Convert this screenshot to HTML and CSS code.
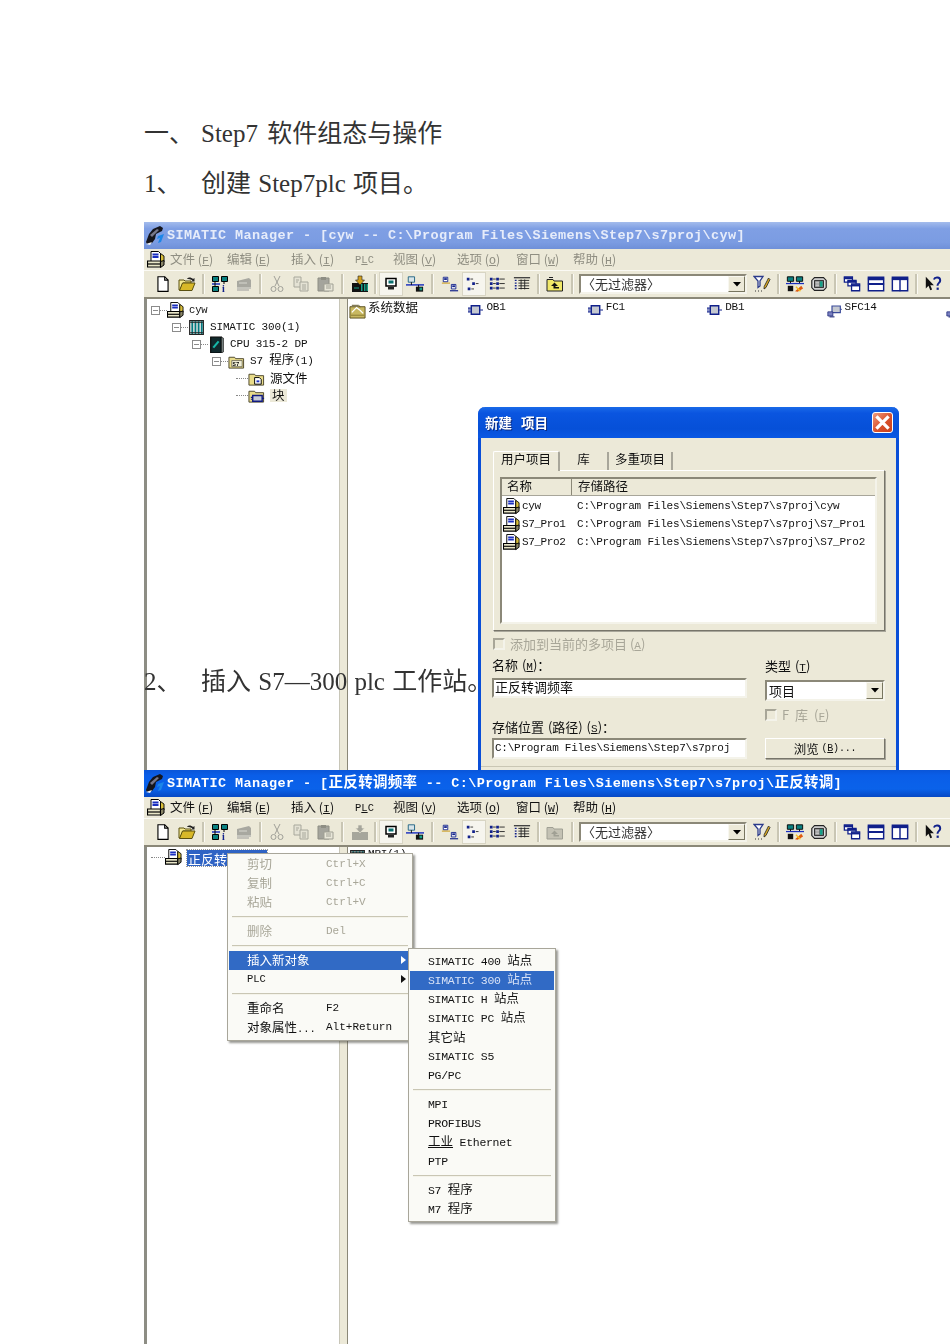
FILE: index.html
```html
<!DOCTYPE html>
<html lang="zh">
<head>
<meta charset="utf-8">
<title>Step7 软件组态与操作</title>
<link rel="stylesheet" href="styles.css">
</head>
<body>
<svg class="sprites" xmlns="http://www.w3.org/2000/svg">
  <symbol id="logo" viewBox="0 0 20 20"><path d="M1 16 4 8l4-5 7-3 3 2-1 3-4 2-2 1-1 5-3 4-5 1z" fill="#15151c"/><path d="M5 9 12 3l2 1-7 7z" fill="#77778a"/><path d="M13 10l6-2-3 8-3 1 2-5-3 1z" fill="#1c86e8"/><path d="M1 18l6-2-2 3z" fill="#f4f4f4"/></symbol>
  <symbol id="project" viewBox="0 0 18 18"><path d="M4 .5h7.500l2 2v8H4z" fill="#fff" stroke="#000"/><path d="M5.500 3.500h6M5.500 6h6" stroke="#1a2fc0" stroke-width="1.800"/><path d="M13.500 2.500l3.500 2.500v6l-3.500 2z" fill="#d9bf3a" stroke="#000" stroke-width=".9"/><path d="M.5 10h13v6H.5z" fill="#e9e6c8" stroke="#000" stroke-width="1.200"/><path d="M1 13h12" stroke="#000" stroke-width="1.200"/><path d="M13.500 10.500l3.500-1v4.500l-3.500 2.500z" fill="#8a8668" stroke="#000"/></symbol>
  <symbol id="rack" viewBox="0 0 16 16"><path d="M1.500 1.500h13v13h-13z" fill="#cfd8d8" stroke="#222"/><path d="M4 2v12M7 2v12M10 2v12M13 2v12" stroke="#007a80" stroke-width="1.500"/><path d="M2 3h12M2 13h12" stroke="#222"/></symbol>
  <symbol id="cpu" viewBox="0 0 16 16"><path d="M2.500 1h10v15h-10z" fill="#11292c" stroke="#000"/><path d="M12.500 1l2 1v13l-2 1z" fill="#7e8a88" stroke="#000" stroke-width=".6"/><path d="M5 11l5-6" stroke="#17b8a8" stroke-width="2"/></symbol>
  <symbol id="s7folder" viewBox="0 0 18 16"><path d="M1 3.500h6l1 1.500h8.500v10H1z" fill="#e9dc8a" stroke="#4a452b"/><path d="M4 7h11v6.500H4z" fill="#f2f0d8" stroke="#333" stroke-width=".6"/><text class="svg-s7" x="4.800" y="13">S7</text></symbol>
  <symbol id="srcfolder" viewBox="0 0 18 16"><path d="M1 3.500h6l1 1.500h8.500v10H1z" fill="#e9dc8a" stroke="#4a452b"/><path d="M7 7h5l2 2v5H7z" fill="#fff" stroke="#000"/><path d="M9 10h3v2H9z" fill="#1a2fc0"/></symbol>
  <symbol id="blockfolder" viewBox="0 0 18 16"><path d="M1 3.500h6l1 1.500h8.500v10H1z" fill="#e9dc8a" stroke="#4a452b"/><path d="M5 8h10v6H5z" fill="#c8ccd8" stroke="#101a80" stroke-width="1.500"/><path d="M3 10h2M3 12h2M15 11h2" stroke="#101a80" stroke-width="1.200"/></symbol>
  <symbol id="sysdata" viewBox="0 0 18 18"><path d="M1 5h16v12H1z" fill="#c8b860" stroke="#5a5020"/><path d="M3 3.500h7l2 1.500" fill="none" stroke="#5a5020"/><path d="M3 11l5-5 4 3 3 3" fill="none" stroke="#fff" stroke-width="1.300"/><path d="M2 14h14" stroke="#8a7a30"/></symbol>
  <symbol id="block" viewBox="0 0 16 12"><path d="M3.500 1.500h9v9h-9z" fill="#c4c8d0" stroke="#10208a" stroke-width="1.500"/><path d="M0 4h3M0 6h3M0 8h3M13 6h3" stroke="#10208a" stroke-width="1.300"/></symbol>
  <symbol id="sfc" viewBox="0 0 18 16"><path d="M6 2h10v8H6z" fill="#c4c8d0" stroke="#3a4a9a" stroke-width="1.400"/><path d="M1 9h6v5H1z" fill="#7a80c0" stroke="#2a3480"/><path d="M3 15h6" stroke="#2a3480" stroke-width="1.400"/><path d="M16 6h2" stroke="#3a4a9a"/></symbol>
  <symbol id="t-new" viewBox="0 0 16 16"><path d="M3.500 1.500h6l3 3v10h-9z" fill="#fff" stroke="#000"/><path d="M9.500 1.500v3h3" fill="none" stroke="#000"/></symbol>
  <symbol id="t-open" viewBox="0 0 18 16"><path d="M1 4h5l1 1h6v2H5L2 14H1z" fill="#f4e890" stroke="#5a5010"/><path d="M4.500 7H17l-3 7.500H1.500z" fill="#d8b828" stroke="#5a5010"/><path d="M9 3c1-2 4-2 6 0l1.500-1v3.500H13l1.500-1c-1.500-1.500-4-1.500-5.500-1.500z" fill="#222"/></symbol>
  <symbol id="t-net" viewBox="0 0 18 18"><path d="M1.500 1.500h6v5h-6z" fill="#0a8080" stroke="#000"/><path d="M10.500 1.500h6v5h-6z" fill="#0a8080" stroke="#000"/><path d="M1.500 11.500h6v5h-6z" fill="#0a8080" stroke="#000"/><path d="M1 9h8" stroke="#1a2fc0" stroke-width="1.500"/><path d="M4 7v4M13 7v2" stroke="#000"/><text class="svg-i" x="11" y="17">i</text></symbol>
  <symbol id="t-card" viewBox="0 0 18 16"><path d="M2 5l12-3 2 2v7H2z" fill="#a8a8a0"/><path d="M2 11h14v2H2z" fill="#c4c4bc"/><path d="M3 13v2M5 13v2M7 13v2M9 13v2M11 13v2M13 13v2" stroke="#999"/><path d="M4 7h8" stroke="#d8d8d0"/></symbol>
  <symbol id="t-cut" viewBox="0 0 16 18"><path d="M5 1l5 10M11 1 6 11" stroke="#a0a098" fill="none"/><circle cx="4.500" cy="14" r="2.500" fill="none" stroke="#a0a098"/><circle cx="11.500" cy="14" r="2.500" fill="none" stroke="#a0a098"/></symbol>
  <symbol id="t-copy" viewBox="0 0 18 16"><path d="M2 1h7v10H2z" fill="#e4e2d4" stroke="#a8a89c"/><path d="M8 6h8v9H8z" fill="#e4e2d4" stroke="#a8a89c"/><path d="M10 9h4M10 11h4M10 13h4M4 4h3M4 6h2" stroke="#a8a89c"/></symbol>
  <symbol id="t-paste" viewBox="0 0 18 16"><path d="M2 2h11v13H2z" fill="#a4a49c" stroke="#8e8e84"/><path d="M5 1h5v3H5z" fill="#8e8e84"/><path d="M8 8h9v7H8z" fill="#e8e6d8" stroke="#a0a094"/><path d="M10 10h5M10 12h5" stroke="#a0a094"/></symbol>
  <symbol id="t-down" viewBox="0 0 18 16"><path d="M1 7h16v9H1z" fill="#111"/><path d="M10 8h1.500v7H10zM13 8h1.500v7H13zM15.500 8H17v7h-1.500z" fill="#16a088"/><path d="M3 12h5" stroke="#16a088"/><path d="M7 0h4v4h2.500L9 9 4.500 4H7z" fill="#d0a020" stroke="#222" stroke-width=".6"/></symbol>
  <symbol id="t-down-off" viewBox="0 0 18 16"><path d="M1 8h16v8H1z" fill="#a6a69c"/><path d="M7 1h4v3h2.500L9 9 4.500 4H7z" fill="#a6a69c" stroke="#ece9d8" stroke-width=".6"/></symbol>
  <symbol id="t-pc" viewBox="-2 -2 18 18"><path d="M2 1.500h10v7.500H2z" fill="#fff" stroke="#000" stroke-width="1.500"/><path d="M4.500 3.500h5v3h-5z" fill="#0a7070"/><path d="M4 10h6v2.500H4z" fill="#222"/></symbol>
  <symbol id="t-netlist" viewBox="0 0 20 18"><path d="M2.500 1h7v6h-7z" fill="#d8e4e8" stroke="#1a5f80"/><path d="M0 10h20" stroke="#1a2fc0" stroke-width="1.600"/><path d="M6 7v3M14 10v3" stroke="#000"/><path d="M11 12h8v5.500h-8z" fill="#111"/><path d="M15 13h3v3h-3z" fill="#16a088"/></symbol>
  <symbol id="t-large" viewBox="0 0 20 18"><path d="M2.500 1.500h5v5h-5z" fill="#fff" stroke="#10208a"/><path d="M3.500 2.500h3v2h-3z" fill="#10208a"/><path d="M1 8h9" stroke="#c89000"/><path d="M11.500 9.500h5v5h-5z" fill="#fff" stroke="#10208a"/><path d="M12.500 10.500h3v2h-3z" fill="#10208a"/><path d="M10 16.500h9" stroke="#10208a" stroke-width="1.300"/></symbol>
  <symbol id="t-small" viewBox="0 0 20 18"><path d="M2 2h3v3H2zM8 7h3v3H8zM3 13h3v3H3z" fill="#10208a"/><path d="M6 3.500h3M12 8.500h3M7 14.500h3" stroke="#333"/></symbol>
  <symbol id="t-list" viewBox="0 0 20 18"><path d="M1 2h3v3H1zM8 2h3v3H8zM1 7h3v3H1zM8 7h3v3H8zM1 12h3v3H1zM8 12h3v3H8z" fill="#10208a"/><path d="M4.500 3.500h3M11.500 3.500h6M4.500 8.500h3M11.500 8.500h6M4.500 13.500h3M11.500 13.500h6" stroke="#222"/></symbol>
  <symbol id="t-detail" viewBox="0 0 20 18"><path d="M1 2h18" stroke="#444" stroke-width="1.500"/><path d="M2 5h2M2 8h2M2 11h2M2 14h2" stroke="#10208a" stroke-width="1.600"/><path d="M6 5h12M6 8h12M6 11h12M6 14h12M9 4v11M13 4v11" stroke="#222"/></symbol>
  <symbol id="t-up" viewBox="0 0 18 16"><path d="M1 3.500h6l1 1.500h8.500v10H1z" fill="#f0e868" stroke="#222"/><path d="M3 1.500h4" stroke="#222"/><path d="M8.500 6.500 5 10h2.500v2.500H13v-1.500H9.500V10H12z" fill="#111"/></symbol>
  <symbol id="t-up-off" viewBox="0 0 18 16"><path d="M1 3.500h6l1 1.500h8.500v10H1z" fill="#c4c2b4" stroke="#a0a094"/><path d="M8.500 6.500 5 10h2.500v2.500H13v-1.500H9.500V10H12z" fill="#a0a094"/></symbol>
  <symbol id="t-filter" viewBox="0 0 18 18"><path d="M1 1.500h9L7 6v5L5 12.500V6z" fill="#fff" stroke="#2a3a8a" stroke-width="1.300"/><path d="M15.500 3l1.500 1.500-4 8-2 1.500.2-2.500z" fill="#d8a820" stroke="#222" stroke-width=".8"/><path d="M2 16h1M5 16h1M8 16h1" stroke="#333"/></symbol>
  <symbol id="t-config" viewBox="0 0 20 18"><path d="M1.500 1h7v5h-7zM11.500 1h7v5h-7z" fill="#0a8080" stroke="#000"/><path d="M0 8.500h20" stroke="#1a2fc0" stroke-width="1.400"/><path d="M5 6v2M15 6v2" stroke="#000"/><path d="M2 11h6v6H2z" fill="#111"/><path d="M10 17l7-6 2 3-6 3.500z" fill="#e05a10"/><path d="M11 12l5 5" stroke="#f4c020" stroke-width="1.500"/></symbol>
  <symbol id="t-sim" viewBox="0 0 20 18"><path d="M5 2h10l3 3v8l-3 3H5l-3-3V5z" fill="#ddd" stroke="#222" stroke-width="1.300"/><path d="M5 5h10v8H5z" fill="#777" stroke="#222"/><path d="M11 6h3v6h-3z" fill="#16a088"/><path d="M6 7h4M6 9h4M6 11h4" stroke="#eee"/></symbol>
  <symbol id="t-cascade" viewBox="0 0 20 18"><path d="M1.500 1h9v6h-9z" fill="#fff" stroke="#10208a" stroke-width="1.400"/><path d="M1 2.500h10" stroke="#10208a" stroke-width="2.400"/><path d="M5.500 5h9v6h-9z" fill="#fff" stroke="#10208a" stroke-width="1.400"/><path d="M5 6.500h10" stroke="#10208a" stroke-width="2.400"/><path d="M9.500 9h9v7.500h-9z" fill="#fff" stroke="#10208a" stroke-width="1.400"/><path d="M9 10.500h10" stroke="#10208a" stroke-width="2.400"/></symbol>
  <symbol id="t-hsplit" viewBox="0 0 20 18"><path d="M1.500 1.500h17v15h-17z" fill="#fff" stroke="#10208a" stroke-width="1.600"/><path d="M1 3.500h18M1 9h18" stroke="#10208a" stroke-width="2.400"/></symbol>
  <symbol id="t-vsplit" viewBox="0 0 20 18"><path d="M1.500 1.500h17v15h-17z" fill="#fff" stroke="#10208a" stroke-width="1.600"/><path d="M1 3.500h18" stroke="#10208a" stroke-width="2.400"/><path d="M10 3v14" stroke="#10208a" stroke-width="1.600"/></symbol>
  <symbol id="t-help" viewBox="0 0 20 18"><path d="M2 1v13l3-3 2 5 2-1-2-4.500h4z" fill="#111"/><path d="M11 4c1-3 7-3 7 1 0 3-3 2.500-3 6" fill="none" stroke="#10208a" stroke-width="2.200"/><path d="M14 13h2.400v2.500H14z" fill="#10208a"/></symbol>
  <symbol id="arrow" viewBox="0 0 8 5"><path d="M0 0h8L4 4.500z" fill="#000"/></symbol>
</svg>

<main class="page">
  <p class="doc-line"><span class="num">一、</span><span class="spaced">Step7 软件组态与操作</span></p>
  <p class="doc-line"><span class="num">1、</span><span>创建 Step7plc 项目。</span></p>

  <section class="win win-inactive win-one">
    <header class="titlebar"><svg class="logo"><use href="#logo"/></svg><span>SIMATIC Manager - [cyw -- C:\Program Files\Siemens\Step7\s7proj\cyw]</span></header>
    <nav class="menubar">
      <svg class="menu-ic"><use href="#project"/></svg>
      <div class="menu-items">
        <span>文件 (<u>F</u>)</span><span>编辑 (<u>E</u>)</span><span>插入 (<u>I</u>)</span><span class="lat">P<u>L</u>C</span><span>视图 (<u>V</u>)</span><span>选项 (<u>O</u>)</span><span>窗口 (<u>W</u>)</span><span>帮助 (<u>H</u>)</span>
      </div>
    </nav>
    <div class="toolbar">
      <i class="tool"><svg><use href="#t-new"/></svg></i><i class="tool"><svg><use href="#t-open"/></svg></i><b class="sep"></b>
      <i class="tool"><svg><use href="#t-net"/></svg></i><i class="tool"><svg><use href="#t-card"/></svg></i><b class="sep"></b>
      <i class="tool"><svg><use href="#t-cut"/></svg></i><i class="tool"><svg><use href="#t-copy"/></svg></i><i class="tool"><svg><use href="#t-paste"/></svg></i><b class="sep sep-w"></b>
      <i class="tool"><svg><use href="#t-down"/></svg></i><b class="sep sep-n"></b>
      <i class="tool on"><svg><use href="#t-pc"/></svg></i><i class="tool"><svg><use href="#t-netlist"/></svg></i><b class="sep sep-w"></b>
      <i class="tool"><svg><use href="#t-large"/></svg></i><i class="tool on"><svg><use href="#t-small"/></svg></i><i class="tool"><svg><use href="#t-list"/></svg></i><i class="tool"><svg><use href="#t-detail"/></svg></i><b class="sep"></b>
      <i class="tool"><svg><use href="#t-up"/></svg></i><b class="sep sep-w"></b>
      <div class="combo combo-tb"><span>〈无过滤器〉</span><em class="drop"><svg><use href="#arrow"/></svg></em></div>
      <i class="tool tool-gap"><svg><use href="#t-filter"/></svg></i><b class="sep"></b>
      <i class="tool"><svg><use href="#t-config"/></svg></i><i class="tool"><svg><use href="#t-sim"/></svg></i><b class="sep"></b>
      <i class="tool"><svg><use href="#t-cascade"/></svg></i><i class="tool"><svg><use href="#t-hsplit"/></svg></i><i class="tool"><svg><use href="#t-vsplit"/></svg></i><b class="sep"></b>
      <i class="tool"><svg><use href="#t-help"/></svg></i>
    </div>
    <div class="client">
      <div class="tree">
        <div class="row d0"><b class="exp"></b><b class="dots"></b><svg class="ic"><use href="#project"/></svg><span class="small">cyw</span></div>
        <div class="row d1"><b class="exp"></b><b class="dots"></b><svg class="ic"><use href="#rack"/></svg><span>SIMATIC 300(1)</span></div>
        <div class="row d2"><b class="exp"></b><b class="dots"></b><svg class="ic"><use href="#cpu"/></svg><span>CPU 315-2 DP</span></div>
        <div class="row d3"><b class="exp"></b><b class="dots"></b><svg class="ic"><use href="#s7folder"/></svg><span>S7 <em class="cn">程序</em>(1)</span></div>
        <div class="row d4"><b class="dots dots-long"></b><svg class="ic"><use href="#srcfolder"/></svg><span class="cn">源文件</span></div>
        <div class="row d4"><b class="dots dots-long"></b><svg class="ic"><use href="#blockfolder"/></svg><span class="cn soft">块</span></div>
      </div>
      <div class="splitter"></div>
      <div class="pane">
        <div class="obj"><svg class="ic"><use href="#sysdata"/></svg><span class="cn">系统数据</span></div>
        <div class="obj obj-b"><svg class="ic-b"><use href="#block"/></svg><span>OB1</span></div>
        <div class="obj obj-b"><svg class="ic-b"><use href="#block"/></svg><span>FC1</span></div>
        <div class="obj obj-b"><svg class="ic-b"><use href="#block"/></svg><span>DB1</span></div>
        <div class="obj obj-b"><svg class="ic-s"><use href="#sfc"/></svg><span>SFC14</span></div>
        <div class="obj obj-b"><svg class="ic-s"><use href="#sfc"/></svg></div>
      </div>
    </div>

    <p class="doc-line overlay-line"><span class="num">2、</span><span>插入 S7—300 plc 工作站。</span></p>

    <div class="dialog">
      <header class="dlg-title"><span>新建 项目</span><b class="close"><svg viewBox="0 0 14 14"><path d="M2.500 2.500l9 9M11.500 2.500l-9 9" stroke="#fff" stroke-width="2.400"/></svg></b></header>
      <div class="dlg-body">
        <div class="tabs"><span class="tab tab-on">用户项目</span><span class="tab tab-lib">库</span><span class="tab tab-multi">多重项目</span></div>
        <div class="group">
          <div class="list">
            <div class="list-head"><span class="col-a">名称</span><span class="col-b">存储路径</span></div>
            <div class="list-row"><svg class="ic"><use href="#project"/></svg><span class="col-n">cyw</span><span>C:\Program Files\Siemens\Step7\s7proj\cyw</span></div>
            <div class="list-row"><svg class="ic"><use href="#project"/></svg><span class="col-n">S7_Pro1</span><span>C:\Program Files\Siemens\Step7\s7proj\S7_Pro1</span></div>
            <div class="list-row"><svg class="ic"><use href="#project"/></svg><span class="col-n">S7_Pro2</span><span>C:\Program Files\Siemens\Step7\s7proj\S7_Pro2</span></div>
          </div>
        </div>
        <label class="check check-top"><b class="box"></b><span>添加到当前的多项目 (<u>A</u>)</span></label>
        <div class="form">
          <div class="form-col form-left">
            <span class="lab">名称 (<u>M</u>)：</span>
            <div class="field field-name">正反转调频率</div>
            <span class="lab lab-path">存储位置 (路径) (<u>S</u>)：</span>
            <div class="field field-path">C:\Program Files\Siemens\Step7\s7proj</div>
          </div>
          <div class="form-col form-right">
            <span class="lab lab-type">类型 (<u>T</u>)</span>
            <div class="combo combo-type"><span>项目</span><em class="drop"><svg><use href="#arrow"/></svg></em></div>
            <label class="check check-f"><b class="box"></b><span>F 库 (<u>F</u>)</span></label>
            <div class="btn"><em class="cn">浏览</em> (<u>B</u>)...</div>
          </div>
        </div>
      </div>
    </div>
  </section>

  <section class="win win-two">
    <header class="titlebar"><svg class="logo"><use href="#logo"/></svg><span>SIMATIC Manager - [<em class="tcn">正反转调频率</em> -- C:\Program Files\Siemens\Step7\s7proj\<em class="tcn">正反转调</em>]</span></header>
    <nav class="menubar">
      <svg class="menu-ic"><use href="#project"/></svg>
      <div class="menu-items">
        <span>文件 (<u>F</u>)</span><span>编辑 (<u>E</u>)</span><span>插入 (<u>I</u>)</span><span class="lat">P<u>L</u>C</span><span>视图 (<u>V</u>)</span><span>选项 (<u>O</u>)</span><span>窗口 (<u>W</u>)</span><span>帮助 (<u>H</u>)</span>
      </div>
    </nav>
    <div class="toolbar">
      <i class="tool"><svg><use href="#t-new"/></svg></i><i class="tool"><svg><use href="#t-open"/></svg></i><b class="sep"></b>
      <i class="tool"><svg><use href="#t-net"/></svg></i><i class="tool"><svg><use href="#t-card"/></svg></i><b class="sep"></b>
      <i class="tool"><svg><use href="#t-cut"/></svg></i><i class="tool"><svg><use href="#t-copy"/></svg></i><i class="tool"><svg><use href="#t-paste"/></svg></i><b class="sep sep-w"></b>
      <i class="tool"><svg><use href="#t-down-off"/></svg></i><b class="sep sep-n"></b>
      <i class="tool on"><svg><use href="#t-pc"/></svg></i><i class="tool"><svg><use href="#t-netlist"/></svg></i><b class="sep sep-w"></b>
      <i class="tool"><svg><use href="#t-large"/></svg></i><i class="tool on"><svg><use href="#t-small"/></svg></i><i class="tool"><svg><use href="#t-list"/></svg></i><i class="tool"><svg><use href="#t-detail"/></svg></i><b class="sep"></b>
      <i class="tool"><svg><use href="#t-up-off"/></svg></i><b class="sep sep-w"></b>
      <div class="combo combo-tb"><span>〈无过滤器〉</span><em class="drop"><svg><use href="#arrow"/></svg></em></div>
      <i class="tool tool-gap"><svg><use href="#t-filter"/></svg></i><b class="sep"></b>
      <i class="tool"><svg><use href="#t-config"/></svg></i><i class="tool"><svg><use href="#t-sim"/></svg></i><b class="sep"></b>
      <i class="tool"><svg><use href="#t-cascade"/></svg></i><i class="tool"><svg><use href="#t-hsplit"/></svg></i><i class="tool"><svg><use href="#t-vsplit"/></svg></i><b class="sep"></b>
      <i class="tool"><svg><use href="#t-help"/></svg></i>
    </div>
    <div class="client">
      <div class="tree tree-two">
        <div class="row d0"><b class="dots dots-root"></b><svg class="ic"><use href="#project"/></svg><span class="selected">正反转调频率</span></div>
      </div>
      <div class="splitter"></div>
      <div class="pane pane-two">
        <div class="obj"><svg class="ic"><use href="#rack"/></svg><span>MPI(1)</span></div>
      </div>
    </div>

    <div class="menu menu-main">
      <div class="mi off"><span class="ml">剪切</span><span>Ctrl+X</span></div>
      <div class="mi off"><span class="ml">复制</span><span>Ctrl+C</span></div>
      <div class="mi off"><span class="ml">粘贴</span><span>Ctrl+V</span></div>
      <hr class="msep">
      <div class="mi off"><span class="ml">删除</span><span>Del</span></div>
      <hr class="msep">
      <div class="mi hi"><span class="ml">插入新对象</span><b class="tri"></b></div>
      <div class="mi"><span class="ml lat">PLC</span><b class="tri"></b></div>
      <hr class="msep">
      <div class="mi"><span class="ml">重命名</span><span>F2</span></div>
      <div class="mi"><span class="ml">对象属性<em class="lat">...</em></span><span>Alt+Return</span></div>
    </div>

    <div class="menu menu-sub">
      <div class="mi"><span>SIMATIC 400 <em class="cn">站点</em></span></div>
      <div class="mi hi"><span>SIMATIC 300 <em class="cn">站点</em></span></div>
      <div class="mi"><span>SIMATIC H <em class="cn">站点</em></span></div>
      <div class="mi"><span>SIMATIC PC <em class="cn">站点</em></span></div>
      <div class="mi"><span class="cn">其它站</span></div>
      <div class="mi"><span>SIMATIC S5</span></div>
      <div class="mi"><span>PG/PC</span></div>
      <hr class="msep">
      <div class="mi"><span>MPI</span></div>
      <div class="mi"><span>PROFIBUS</span></div>
      <div class="mi"><span><u class="cn">工业</u> Ethernet</span></div>
      <div class="mi"><span>PTP</span></div>
      <hr class="msep">
      <div class="mi"><span>S7 <em class="cn">程序</em></span></div>
      <div class="mi"><span>M7 <em class="cn">程序</em></span></div>
    </div>
  </section>
</main>
</body>
</html>
```

FILE: styles.css
```css
* { box-sizing: border-box; }
html, body { margin: 0; padding: 0; background: #fff; }
body { width: 950px; height: 1344px; overflow: hidden; }
em, i { font-style: normal; }
.sprites { display: none; }
.svg-s7 { font: bold 6px "Liberation Mono", monospace; fill: #000; }
.svg-i { font: bold 10px "Liberation Serif", serif; fill: #10208a; }

.page { height: 1344px; padding: 108px 0 0 144px; overflow: hidden; }
.doc-line {
  display: flex; margin: 0; height: 50px; align-items: center;
  font: 25px/1 "Liberation Serif", "Noto Sans CJK SC", serif; color: #333;
  white-space: nowrap; word-spacing: 1px;
}
.num { width: 57px; flex: none; }
.spaced { word-spacing: 3px; }

.cn { font-family: "Noto Sans CJK SC", sans-serif; font-size: 12.500px; letter-spacing: 0; line-height: 0; }
.lat { font-family: "Liberation Mono", monospace; font-size: 10.500px; letter-spacing: 0; }

.win {
  position: relative; width: 806px; overflow: hidden; background: #ece9d8;
  display: flex; flex-direction: column; filter: blur(.35px);
  font: 11px/1 "Liberation Mono", "Noto Sans CJK SC", monospace; color: #111;
}
.win-one { height: 548px; margin-top: 14px; }
.win-two { height: 574px; }

.titlebar {
  height: 27px; flex: none; display: flex; align-items: center; gap: 2px; padding-left: 1px;
  background: linear-gradient(#0a55d8, #0a5ee8 20%, #0a62ea 70%, #0648c4);
  color: #fff; font: bold 13.500px/1 "Liberation Mono", "Noto Sans CJK SC", monospace;
  letter-spacing: .4px; white-space: nowrap;
}
.tcn { font-family: "Noto Sans CJK SC", sans-serif; font-size: 14.500px; letter-spacing: .3px; line-height: 0; }
.win-inactive .titlebar { background: linear-gradient(#a4bcec, #7f9fe4 25%, #7b9ce2 75%, #6f90d8); color: #e6ecfa; }
.logo { width: 20px; height: 20px; flex: none; }

.menubar { height: 22px; flex: none; display: flex; align-items: center; padding-left: 3px; border-bottom: 1px solid #fbfaf4; }
.menu-ic { width: 18px; height: 18px; flex: none; margin-right: 5px; }
.menu-items {
  display: grid; grid-template-columns: 57px 64px 64px 38px 64px 59px 57px auto;
  font: 12.500px/1 "Noto Sans CJK SC", sans-serif; white-space: nowrap;
}
.menu-items u { font: 11.500px/1 "Liberation Mono", monospace; }
.menu-items .lat { font-size: 10.500px; line-height: 14px; }
.menu-items .lat u { font-size: 10.500px; }
.win-inactive .menu-items { color: #8f8e82; }

.toolbar { height: 26px; flex: none; display: flex; align-items: center; padding-left: 7px; }
.tool { width: 24px; height: 24px; flex: none; display: flex; align-items: center; justify-content: center; }
.tool svg { width: 18px; height: 18px; }
.tool.on { background: #f6f5ee; outline: 1px solid #d8d5c4; outline-offset: -1px; }
.tool-gap { margin-left: 3px; }
.sep { width: 9px; height: 20px; flex: none; display: flex; justify-content: center; }
.sep::before { content: ""; width: 2px; background: #c9c6b4; border-right: 1px solid #fbfaf4; }
.sep-n { width: 7px; }
.sep-w { width: 11px; }

.combo {
  display: flex; align-items: center; justify-content: space-between; background: #fff;
  border: 2px solid; border-color: #8b8878 #f4f3ea #f4f3ea #8b8878;
  font: 13px/1 "Noto Sans CJK SC", sans-serif;
}
.combo-tb { width: 168px; height: 20px; flex: none; padding-left: 1px; color: #333; margin-left: 1px; }
.combo-tb span { position: relative; top: -1px; }
.drop {
  width: 17px; height: 100%; flex: none; display: flex; align-items: center; justify-content: center;
  background: #ece9d8; border: 1px solid; border-color: #f8f7f0 #77755f #77755f #f8f7f0;
}
.drop svg { width: 8px; height: 5px; }

.client { flex: 1; min-height: 0; display: flex; border-top: 2px solid #8b8878; }
.tree {
  width: 196px; flex: none; background: #fff; padding-top: 3px;
  border-left: 3px solid #8d8d84; border-right: 1px solid #c8c6b8;
  white-space: nowrap;
}
.splitter { width: 8px; flex: none; background: #ece9d8; border-right: 1px solid #8b8878; }
.pane {
  flex: 1; min-width: 0; background: #fff; overflow: hidden; padding: 3px 0 0 1px;
  display: grid; grid-template-columns: repeat(6, 119.400px); grid-auto-rows: 20px;
  letter-spacing: -.2px;
}

.row { height: 17px; display: flex; align-items: center; }
.row > span { margin-left: 5px; letter-spacing: -.15px; }
.row > .cn { letter-spacing: 0; line-height: 1; }
.d0 { padding-left: 4px; }
.d1 { padding-left: 25px; }
.d2 { padding-left: 45px; }
.d3 { padding-left: 65px; }
.d4 { padding-left: 89px; }
.exp { width: 9px; height: 9px; flex: none; border: 1px solid #8b8b8b; background: linear-gradient(#8b8b8b, #8b8b8b) center/5px 1px no-repeat #fff; }
.dots { width: 7px; height: 0; flex: none; border-top: 1px dotted #888; }
.dots-long { width: 12px; }
.dots-root { width: 14px; margin-left: 4px; }
.ic { width: 17px; height: 17px; flex: none; }
.small { font-size: 10.500px; }
.soft { background: #ece9d8; padding: 0 2px; }
.tree-two .d0 { padding-left: 0; margin-top: -1px; }
.tree .selected { background: #2f63c4; color: #fff; width: 80px; height: 16px; display: block; margin-left: 5px; padding: 2px 0 0 1px; font: 13px/1 "Noto Sans CJK SC", sans-serif; letter-spacing: 0; outline: 1px dotted #999; }

.obj { display: flex; align-items: flex-start; gap: 2px; white-space: nowrap; }
.obj > .cn { line-height: 1; margin-top: -1px; }
.obj-b { gap: 3px; }
.ic-b { width: 15px; height: 12px; flex: none; margin-top: 2px; }
.ic-s { width: 15px; height: 14px; flex: none; margin-top: 2px; }
.pane-two { padding-top: 2px; }

.overlay-line { position: absolute; left: 0; top: 434px; }

.dialog {
  position: absolute; left: 334px; top: 185px; width: 421px; height: 370px;
  background: #ece9d8; border: 3px solid #0a4fd8; border-top: 0; border-radius: 7px 7px 0 0;
  display: flex; flex-direction: column;
}
.dlg-title {
  height: 31px; flex: none; margin: 0 -3px; padding: 0 6px 0 7px; display: flex; align-items: center; justify-content: space-between;
  background: linear-gradient(#1a6ae8, #0a55e0 20%, #0650d8 70%, #0a58e4); border-radius: 7px 7px 0 0;
  color: #fff; font: bold 13.500px/1 "Noto Sans CJK SC", sans-serif; text-shadow: 1px 1px 0 #0a2a80; word-spacing: 6px;
}
.close { width: 21px; height: 21px; display: flex; background: linear-gradient(135deg, #ef9b80, #d8502a 55%, #c8401c); border: 1px solid #fff; border-radius: 3px; }
.close svg { width: 19px; height: 19px; }
.dlg-body { flex: none; height: 329px; padding: 14px 11px 0 11px; border-bottom: 1px solid #c9c6b4; }
.tabs { display: flex; height: 18px; font: 12.500px/14px "Noto Sans CJK SC", sans-serif; margin-left: 1px; }
.tab { display: block; text-align: center; border-right: 2px solid #a8a69a; }
.tab-on { width: 67px; background: #ece9d8; border-left: 1px solid #fff; border-top: 1px solid #fff; border-radius: 2px 2px 0 0; margin-top: -1px; height: 20px; position: relative; }
.tab-lib { width: 49px; }
.tab-multi { width: 64px; }
.group { width: 392px; height: 161px; margin-left: 1px; padding: 6px 7px 8px 6px; border: 1px solid; border-color: #fff #77756a #77756a #fff; box-shadow: 1px 1px 0 #a8a69a; }
.list { height: 147px; background: #fff; border: 2px solid; border-color: #8b8878 #f4f3ea #f4f3ea #8b8878; }
.list-head { display: flex; height: 17px; background: #ece9d8; border-bottom: 1px solid #a8a69a; font: 12.500px/14px "Noto Sans CJK SC", sans-serif; }
.col-a { width: 70px; padding-left: 5px; border-right: 1px solid #8b8878; }
.col-b { flex: 1; padding-left: 6px; }
.list-row { height: 18px; display: flex; align-items: center; padding-left: 1px; white-space: nowrap; letter-spacing: -.2px; }
.list-head + .list-row { margin-top: 1px; }
.list-row .ic { margin-right: 2px; }
.col-n { width: 55px; flex: none; letter-spacing: -.4px; }
.check { display: flex; align-items: center; height: 16px; gap: 5px; color: #a8a698; font: 13px/1 "Noto Sans CJK SC", sans-serif; }
.check u { font: 11px/1 "Liberation Mono", monospace; }
.check-top { margin: 5px 0 1px 1px; }
.check-f { margin-top: 6px; word-spacing: 3px; }
.box { width: 12px; height: 12px; flex: none; border: 2px solid; border-color: #a8a698 #f4f3ea #f4f3ea #a8a698; }
.form { display: flex; gap: 18px; margin-top: 5px; }
.form-col { display: flex; flex-direction: column; }
.form-left { width: 255px; }
.form-right { width: 120px; }
.lab { height: 16px; font: 13px/16px "Noto Sans CJK SC", sans-serif; word-spacing: 1px; }
.lab u { font: 11px/1 "Liberation Mono", monospace; }
.field { background: #fff; border: 2px solid; border-color: #8b8878 #f4f3ea #f4f3ea #8b8878; padding-left: 1px; white-space: nowrap; }
.field-name { height: 20px; margin-top: 5px; font: 13px/13px "Noto Sans CJK SC", sans-serif; }
.field-path { height: 21px; margin-top: 3px; line-height: 17px; letter-spacing: -.25px; }
.lab-path { margin-top: 21px; }
.lab-type { margin-top: 1px; }
.combo-type { height: 21px; margin-top: 6px; padding-left: 2px; }
.btn { height: 21px; margin-top: 15px; display: flex; align-items: center; justify-content: center; background: #ece9d8; border: 1px solid; border-color: #fff #77756a #77756a #fff; box-shadow: 1px 1px 0 #a8a69a; font: 10px/1 "Liberation Mono", monospace; white-space: pre; letter-spacing: -.2px; word-spacing: -3px; }

.menu {
  position: absolute; background: #fafaf6; border: 1px solid #a8a69a;
  box-shadow: 2px 2px 2px rgba(70, 70, 60, .55); white-space: nowrap;
}
.menu-main { left: 83px; top: 83px; width: 186px; height: 188px; padding: 1px 1px 0; }
.menu-sub { left: 264px; top: 178px; width: 148px; height: 274px; padding: 3px 1px 0; }
.mi { position: relative; height: 19px; display: flex; align-items: center; padding-left: 18px; }
.ml { width: 79px; flex: none; font: 12.500px/1 "Noto Sans CJK SC", sans-serif; }
.ml.lat { font: 10.500px/1 "Liberation Mono", monospace; }
.ml .lat { font-size: 10.500px; }
.menu-sub .mi { font-size: 11.500px; letter-spacing: -.3px; }
.menu-sub .mi > .cn { line-height: 1; }
.mi.off { color: #a8a698; }
.mi.hi { background: #316ac5; color: #fff; }
.menu-sub .mi.hi { color: #d8e2f6; }
.menu-sub u { text-underline-offset: 1px; }
.tri { position: absolute; right: 5px; top: 5px; border: 4px solid transparent; border-left: 5px solid #111; border-right: 0; }
.hi .tri { border-left-color: #fff; }
.msep { height: 2px; margin: 4px 3px; border: 0; background: #c9c6b4; border-bottom: 1px solid #f4f3ea; }
```
